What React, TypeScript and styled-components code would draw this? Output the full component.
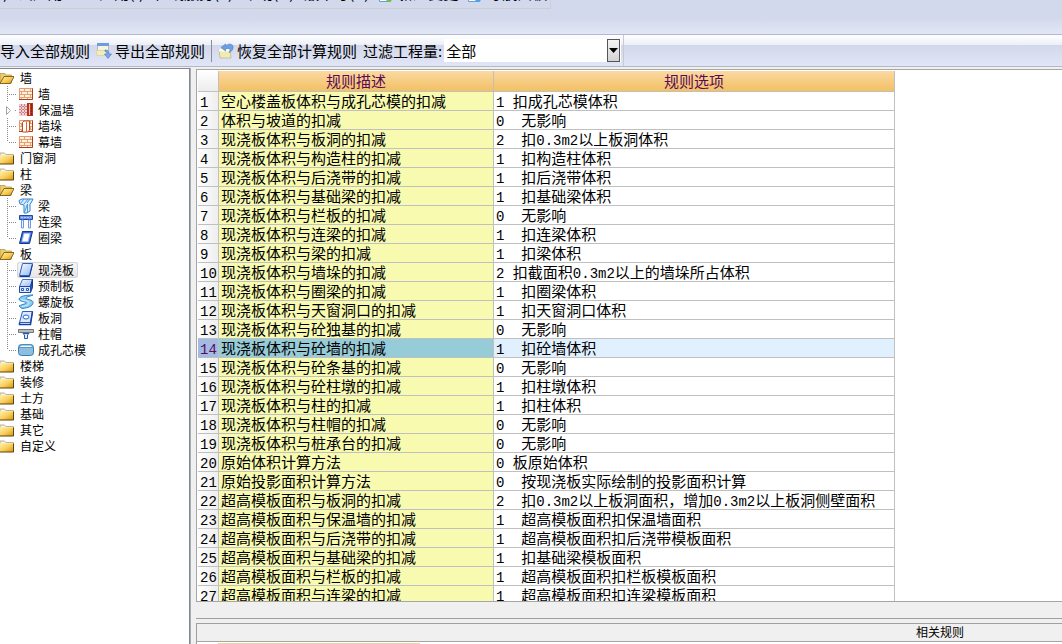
import React from "react";
import styled, { createGlobalStyle, css } from "styled-components";

const ui = '"Noto Sans CJK SC", sans-serif';

const GlobalStyle = createGlobalStyle`
  *, *::before, *::after { box-sizing: border-box; }
  html, body, #root { height: 100%; }
  body { margin: 0; overflow: hidden; background: #f0f0f0; color: #000; font-family: ${ui}; }
  button, select { font: inherit; color: inherit; }
`;

const Window = styled.div`
  display: flex;
  flex-direction: column;
  height: 100%;
`;

const MenuArea = styled.header`
  flex: none;
  height: 35px;
  background: linear-gradient(#d3d9ec 0, #d3d9ec 18px, #e1e7f6 34px);
  border-bottom: 1px solid #b4b7cf;
`;

const MenuBar = styled.nav`
  display: flex;
  align-items: flex-end;
  gap: 10px;
  width: 551px;
  height: 9px;
  padding: 0 0 6px 3px;
  overflow: hidden;
  border: solid #cfcdcd;
  border-width: 0 1px 1px 0;
  font-size: 15px;
  line-height: 18px;
`;

const MenuItem = styled.button`
  display: flex;
  align-items: flex-end;
  flex: none;
  gap: 6px;
  padding: 0;
  border: 0;
  background: none;
  white-space: nowrap;
`;

const ToolBar = styled.div`
  display: flex;
  align-items: center;
  flex: none;
  height: 32px;
  background: linear-gradient(#ffffff 0, #eceff8 10px, #d2d8eb 10px, #e0e6f6 31px);
  border-bottom: 1px solid #b4b7c4;
  font-size: 15px;
  line-height: 22px;
`;

const ToolGroup = styled.div`
  display: flex;
  align-items: center;
  height: 100%;
  padding-right: 2px;
  border-right: 1px solid #c8cad2;
`;

const ToolButton = styled.button`
  display: flex;
  align-items: center;
  gap: 3px;
  padding: 0;
  margin-right: 6px;
  border: 0;
  background: none;
  white-space: nowrap;
`;

const Divider = styled.span`
  width: 1px;
  height: 22px;
  margin-right: 6px;
  background: #8b8d99;
`;

const FilterLabel = styled.label`
  margin-right: 2px;
  white-space: nowrap;
`;

const Combo = styled.div`
  display: flex;
  width: 177px;
  height: 23px;
  background: #fff;
`;

const ComboSelect = styled.select`
  flex: 1;
  min-width: 0;
  padding: 0 2px;
  border: 0;
  outline: 0;
  appearance: none;
  background: transparent;
`;

const ComboArrow = styled.span`
  display: flex;
  align-items: center;
  justify-content: center;
  width: 13px;
  margin-right: 1px;
  border: 1px solid #555;
  background: linear-gradient(#f4f4f4, #d4d4d4);
  pointer-events: none;
`;

const Body = styled.main`
  display: flex;
  flex: 1;
  min-height: 0;
  padding-top: 1px;
`;

const TreePanel = styled.aside`
  flex: none;
  width: 190px;
  padding-top: 1px;
  background: #fff;
  border: solid #828790;
  border-width: 1px 1px 0 0;
  overflow: hidden;
  font-size: 12px;
  line-height: 16px;
`;

const TreeList = styled.ul`
  margin: 0;
  padding: 0;
  list-style: none;
`;

const FolderButton = styled.button`
  display: flex;
  align-items: center;
  gap: 6px;
  height: 16px;
  padding: 0;
  border: 0;
  background: none;
`;

const ChildItem = styled.li`
  display: grid;
  grid-template-columns: 17px auto;
  justify-content: start;
  height: 16px;
`;

const LeafButton = styled.button<{ $selected?: boolean }>`
  display: flex;
  align-items: center;
  gap: 4px;
  height: 16px;
  padding: 0 4px 0 1px;
  border: 0;
  border-radius: 3px;
  background: none;
  white-space: nowrap;
  ${(p) =>
    p.$selected &&
    css`
      background: linear-gradient(#f8f8f8, #e5e5e5);
      box-shadow: inset 0 0 0 1px #d5d5d5;
    `}
`;

const Content = styled.div`
  display: flex;
  flex-direction: column;
  flex: 1;
  min-width: 0;
  padding-left: 5px;
  border-left: 1px solid #a9acb3;
`;

const GridPanel = styled.section`
  flex: 1;
  min-height: 0;
  margin-top: 1px;
  padding: 1px 0 0 1px;
  overflow: hidden;
  background: #fff;
  border: solid #a6a6a6;
  border-width: 1px 0 1px 1px;
`;

const RuleTable = styled.table`
  width: 697px;
  table-layout: fixed;
  border-collapse: separate;
  border-spacing: 0;
  font-size: 15px;
  line-height: 18px;
`;

const HeadCell = styled.th<{ $width: number; $blank?: boolean }>`
  width: ${(p) => p.$width}px;
  height: 21px;
  padding: 0;
  border: solid #c0c0c0;
  border-width: 0 1px 1px 0;
  background: ${(p) => (p.$blank ? "linear-gradient(#fff, #ececec)" : "linear-gradient(#fad9a2, #f3c063)")};
  color: #5a0a5a;
  font-weight: 400;
`;

const cell = css`
  height: 19px;
  border: solid #c0c0c0;
  border-width: 0 1px 1px 0;
  white-space: pre;
  text-align: left;
  font-weight: 400;
`;

const NumberCell = styled.th<{ $active: boolean }>`
  ${cell}
  padding: 0 0 0 2px;
  background: ${(p) => (p.$active ? "#a3bbe4" : "linear-gradient(90deg, #fff, #eee)")};
  color: ${(p) => (p.$active ? "#5a0a5a" : "#000")};
`;

const NameCell = styled.td<{ $active: boolean }>`
  ${cell}
  padding: 0 0 0 2px;
  background: ${(p) => (p.$active ? "#96cbd8" : "#f8fbaf")};
`;

const OptionCell = styled.td<{ $active: boolean }>`
  ${cell}
  padding: 0 0 0 2px;
  background: ${(p) => (p.$active ? "#e0f0ff" : "#fff")};
`;

const Mono = styled.span`
  font-family: "Liberation Mono", monospace;
  font-size: 14px;
  line-height: 1;
`;

const Splitter = styled.div`
  flex: none;
  height: 17px;
  border-bottom: 1px solid #a0a0a0;
`;

const RelatedPanel = styled.section`
  flex: none;
  height: 21px;
  margin-top: 4px;
  border: solid #a0a0a0;
  border-width: 1px 0 0 1px;
  background: #fff;
`;

const RelatedTitle = styled.h2`
  height: 18px;
  margin: 0;
  padding-right: 98px;
  border-bottom: 1px solid #a6a6a6;
  background: #f0f0f0;
  font-size: 12px;
  font-weight: 400;
  line-height: 16px;
  text-align: right;
`;

const RelatedHead = styled.div`
  width: 202px;
  height: 1px;
  margin: 1px 0 0 21px;
  background: #f0d49c;
`;

const Folder = ({ open }: { open?: boolean }) => (
  <svg width="14" height="14" viewBox="0 0 14 14" aria-hidden="true">
    <defs>
      <linearGradient id={open ? "fo" : "fc"} x1="0" y1="0" x2="1" y2="1">
        <stop offset="0" stopColor="#fff0a8" />
        <stop offset=".5" stopColor="#f8cf5c" />
        <stop offset="1" stopColor="#dc9012" />
      </linearGradient>
    </defs>
    {open ? (
      <>
        <path d="M0 2.500h5l1 1.500h5.500V12H0z" fill="#f0cd62" stroke="#b09a5c" strokeWidth=".8" />
        <path d="M0 12.500 4 5.500h10L10.500 12.500z" fill="url(#fo)" stroke="#7d5a10" strokeWidth=".9" />
      </>
    ) : (
      <>
        <path d="M0 2h4.500L6 3.500h7.500v2H0z" fill="#fbf1c8" stroke="#a8a08a" strokeWidth=".8" />
        <path d="M0 4.500h13.500V13H0z" fill="url(#fc)" />
        <path d="M0 13h13.500V4.500" fill="none" stroke="#5f4408" />
      </>
    )}
  </svg>
);

const Guide = ({ last, caret }: { last?: boolean; caret?: boolean }) => (
  <svg width="17" height="16" viewBox="0 0 17 16" aria-hidden="true" fill="none" stroke="#888">
    {!caret && <path d={last ? "M7.5 0v8" : "M7.5 0v16"} strokeDasharray="1 1" />}
    <path d={caret ? "M15 8.5h2" : "M9 8.5h8"} strokeDasharray="1 1" />
    {caret && <path d="M6.5 4.5v8l4-4z" fill="#fff" stroke="#a6a6a6" />}
  </svg>
);

type Glyph =
  | "brick" | "insulated" | "pier" | "beam" | "link" | "ring"
  | "slab" | "precast" | "spiral" | "hole" | "cap" | "core";

const Bricks = () => (
  <>
    <path d="M1 2h14v12H1z" fill="#fff0e0" />
    <path d="M1 5.500h14M1 8.500h14M1 11.500h14M6.500 2.500v3M12.500 2.500v3M3.500 5.500v3M9.500 5.500v3M6.500 8.500v3M12.500 8.500v3M3.500 11.500v2M9.500 11.500v2" stroke="#e8a070" />
    <path d="M1.500 14V2.500H15" fill="none" stroke="#e09a70" />
    <path d="M1 13.500h13.500V2.500" fill="none" stroke="#a8401c" />
  </>
);

const glyphs: Record<Glyph, React.ReactNode> = {
  brick: <Bricks />,
  insulated: (
    <>
      <path d="M1 2h8v12H1z" fill="#f0d0d0" />
      <path d="M1 4.500h8M1 7.500h8M1 10.500h8M3.500 2v12M6.500 2v12" stroke="#d08088" strokeDasharray="2 1" />
      <path d="M9 1h6v13H9z" fill="#b83420" />
      <path d="M11.500 2v11" stroke="#f8c8a8" />
      <path d="M13.500 2v11" stroke="#842313" strokeDasharray="2 1" />
    </>
  ),
  pier: (
    <>
      <Bricks />
      <path d="M4.500 4.500 6 3h5.500v9L10 14H4.500z" fill="#fff" stroke="#c04a18" />
      <path d="M8.500 4v10" stroke="#d8683a" />
    </>
  ),
  beam: (
    <>
      <path d="M1 2.500 4 1h11l-2 4-1 1v7l-3 2H6V7L2 6z" fill="#d9eefc" stroke="#3382c8" />
      <path d="m3 5 3-4M6 6l4-5M9 5l3-4M6.500 14l3-8M9.500 6v9" stroke="#4c98d8" />
    </>
  ),
  link: (
    <>
      <path d="M1.500 1.500h13v4h-13z" fill="#6c94e6" stroke="#1c46a8" />
      <path d="M3 3.500h10" stroke="#b8ccf8" strokeDasharray="2 1" />
      <path d="M3.500 6h2v8h-2zM10.500 6h2v8h-2z" fill="#edf4ff" stroke="#7099dc" />
    </>
  ),
  ring: (
    <>
      <path d="M4.500 1.500h10l-3 12H1.500z" fill="#3a6cd4" stroke="#15388e" />
      <path d="M6 3.500h6l-2 8H4z" fill="#fff" stroke="#a9c4f4" />
    </>
  ),
  slab: (
    <>
      <path d="M4.500 1.500h10l-3 12H1.500z" fill="url(#slabFill)" stroke="#2d64ca" />
      <path d="M1.500 14.500h10l3-12" fill="none" stroke="#123b96" />
    </>
  ),
  precast: (
    <>
      <path d="M4.500 1.500h10l-2 7h-11z" fill="url(#slabFill)" stroke="#3b6fd0" />
      <path d="M12.500 8.500l2-7v8l-2 5z" fill="#2556bc" stroke="#163b91" />
      <path d="M1.500 8.500h11v6h-11z" fill="#dce8ff" stroke="#1c48a8" />
      <path d="M3.500 10.500h2v2h-2zM8.500 10.500h2v2h-2z" fill="#fff" stroke="#2556bc" />
    </>
  ),
  spiral: (
    <>
      <path d="M15 1C8 1 2 2 1 5c0 3 7 2 7 4 0 1-3 1-7 3l3 2.500c6-.5 11-2.500 11-6C15 5 8 6 8 4c0-1 3-1.500 7-3z" fill="#8bcaf2" stroke="#2b83c8" />
      <path d="M3 5c1 2 8 1 8 4 0 2-3 3-7 3.500" fill="none" stroke="#dcf2ff" />
    </>
  ),
  hole: (
    <>
      <path d="M4.500 1.500h10l-2 11h-11z" fill="#dce8ff" stroke="#285dc2" />
      <path d="M1.500 12.500v2h11l2-13" fill="none" stroke="#173f9f" strokeWidth="1.500" />
      <ellipse cx="8" cy="7" rx="3" ry="2" fill="#fff" stroke="#2563ca" />
    </>
  ),
  cap: (
    <>
      <path d="M.5 3.500h15v3H.5z" fill="#b9bdc2" stroke="#71767d" />
      <path d="M5 7.500h6L9.500 9v3.500h-3V9z" fill="#d9ebff" stroke="#235ab0" />
    </>
  ),
  core: (
    <>
      <rect x=".5" y="2.500" width="15" height="11" rx="3" fill="#8cbee0" stroke="#397dad" />
      <path d="M1 5.500 3 3h10l2 2.500z" fill="#f2faff" stroke="#5c9ac4" />
    </>
  ),
};

const LeafIcon = ({ name }: { name: Glyph }) => (
  <svg width="16" height="16" viewBox="0 0 16 16" fill="none" aria-hidden="true">
    <defs>
      <linearGradient id="slabFill" x1="0" y1="0" x2="1" y2="1">
        <stop offset="0" stopColor="#fff" />
        <stop offset="1" stopColor="#8fb6f5" />
      </linearGradient>
    </defs>
    {glyphs[name]}
  </svg>
);

const ExportIcon = () => (
  <svg width="16" height="16" viewBox="0 0 16 16" fill="none" aria-hidden="true">
    <path d="M1.500 1.500h11v9h-11z" fill="#f6f4dc" stroke="#b4bccb" />
    <path d="M1 0h12v3H1z" fill="#6c9be0" />
    <path d="M0 7.500h11v5H1z" fill="#f2edb8" stroke="#cfc898" strokeWidth=".6" />
    <path d="M9 7c3 0 4 1 4 4h2.500L12 15.500 8.500 11H11c0-1.500-.5-2.500-2-2.500z" fill="#7ba6ea" stroke="#5580c8" strokeWidth=".7" />
  </svg>
);

const RestoreIcon = () => (
  <svg width="16" height="16" viewBox="0 0 16 16" fill="none" aria-hidden="true">
    <path d="M1 6h11l1 9H2z" fill="#f1eab2" stroke="#b4b190" strokeWidth=".7" />
    <path d="M1 5.500h11v3H1z" fill="#fbfbee" />
    <path d="M3 4.500 7.500 1v2C10 .5 14 .5 15 3c.5 3-1 5.500-4 6.500 1.500-2 1.500-3.500 0-4-1-.3-2 0-3.500.5v2z" fill="#6f9fe0" stroke="#4a7cc6" strokeWidth=".6" />
  </svg>
);

const MenuIcon = ({ color }: { color: string }) => (
  <svg width="13" height="16" viewBox="0 0 13 16" aria-hidden="true">
    <path d="M.5 3.500h11v12H.5z" fill="#f4faff" stroke="#6c9fc8" />
    <circle cx="10" cy="13" r="3" fill={color} />
  </svg>
);

interface Leaf { label: string; icon: Glyph; caret?: boolean; selected?: boolean }
interface Group { label: string; children?: Leaf[] }

const tree: Group[] = [
  { label: "墙", children: [
    { label: "墙", icon: "brick" },
    { label: "保温墙", icon: "insulated", caret: true },
    { label: "墙垛", icon: "pier" },
    { label: "幕墙", icon: "brick" },
  ] },
  { label: "门窗洞" },
  { label: "柱" },
  { label: "梁", children: [
    { label: "梁", icon: "beam" },
    { label: "连梁", icon: "link" },
    { label: "圈梁", icon: "ring" },
  ] },
  { label: "板", children: [
    { label: "现浇板", icon: "slab", selected: true },
    { label: "预制板", icon: "precast" },
    { label: "螺旋板", icon: "spiral" },
    { label: "板洞", icon: "hole" },
    { label: "柱帽", icon: "cap" },
    { label: "成孔芯模", icon: "core" },
  ] },
  { label: "楼梯" },
  { label: "装修" },
  { label: "土方" },
  { label: "基础" },
  { label: "其它" },
  { label: "自定义" },
];

const rules: [string, string][] = [
  ["空心楼盖板体积与成孔芯模的扣减", "1 扣成孔芯模体积"],
  ["体积与坡道的扣减", "0  无影响"],
  ["现浇板体积与板洞的扣减", "2  扣0.3m2以上板洞体积"],
  ["现浇板体积与构造柱的扣减", "1  扣构造柱体积"],
  ["现浇板体积与后浇带的扣减", "1  扣后浇带体积"],
  ["现浇板体积与基础梁的扣减", "1  扣基础梁体积"],
  ["现浇板体积与栏板的扣减", "0  无影响"],
  ["现浇板体积与连梁的扣减", "1  扣连梁体积"],
  ["现浇板体积与梁的扣减", "1  扣梁体积"],
  ["现浇板体积与墙垛的扣减", "2 扣截面积0.3m2以上的墙垛所占体积"],
  ["现浇板体积与圈梁的扣减", "1  扣圈梁体积"],
  ["现浇板体积与天窗洞口的扣减", "1  扣天窗洞口体积"],
  ["现浇板体积与砼独基的扣减", "0  无影响"],
  ["现浇板体积与砼墙的扣减", "1  扣砼墙体积"],
  ["现浇板体积与砼条基的扣减", "0  无影响"],
  ["现浇板体积与砼柱墩的扣减", "1  扣柱墩体积"],
  ["现浇板体积与柱的扣减", "1  扣柱体积"],
  ["现浇板体积与柱帽的扣减", "0  无影响"],
  ["现浇板体积与桩承台的扣减", "0  无影响"],
  ["原始体积计算方法", "0 板原始体积"],
  ["原始投影面积计算方法", "0  按现浇板实际绘制的投影面积计算"],
  ["超高模板面积与板洞的扣减", "2  扣0.3m2以上板洞面积，增加0.3m2以上板洞侧壁面积"],
  ["超高模板面积与保温墙的扣减", "1  超高模板面积扣保温墙面积"],
  ["超高模板面积与后浇带的扣减", "1  超高模板面积扣后浇带模板面积"],
  ["超高模板面积与基础梁的扣减", "1  扣基础梁模板面积"],
  ["超高模板面积与栏板的扣减", "1  超高模板面积扣栏板模板面积"],
  ["超高模板面积与连梁的扣减", "1  超高模板面积扣连梁模板面积"],
];

const ACTIVE_ROW = 14;

/* Latin runs are set in the half-width face, Chinese runs in the cell font. */
const Mixed = ({ text }: { text: string }) => (
  <>
    {(text.match(/[\x20-\x7e]+|[^\x20-\x7e]+/g) ?? []).map((run, i) =>
      /^[\x20-\x7e]/.test(run) ? <Mono key={i}>{run}</Mono> : run
    )}
  </>
);

export default function App() {
  return (
    <Window>
      <GlobalStyle />
      <MenuArea>
        <MenuBar>
          <MenuItem>)</MenuItem>
          <MenuItem>云应用</MenuItem>
          <MenuItem>BIM应用(I)</MenuItem>
          <MenuItem>在线服务(S)</MenuItem>
          <MenuItem>帮助(H)</MenuItem>
          <MenuItem>版本号(B)</MenuItem>
          <MenuItem><MenuIcon color="#6cc24a" />新建变更</MenuItem>
          <MenuItem><MenuIcon color="#4ea3e6" />导航面板</MenuItem>
        </MenuBar>
      </MenuArea>
      <ToolBar>
        <ToolGroup>
          <ToolButton>导入全部规则</ToolButton>
          <ToolButton><ExportIcon />导出全部规则</ToolButton>
          <Divider />
          <ToolButton><RestoreIcon />恢复全部计算规则</ToolButton>
          <FilterLabel htmlFor="quantity">过滤工程量:</FilterLabel>
          <Combo>
            <ComboSelect id="quantity" defaultValue="all">
              <option value="all">全部</option>
            </ComboSelect>
            <ComboArrow>
              <svg width="9" height="5" viewBox="0 0 9 5" aria-hidden="true"><path d="M0 0h9L4.500 5z" /></svg>
            </ComboArrow>
          </Combo>
        </ToolGroup>
      </ToolBar>
      <Body>
        <TreePanel>
          <TreeList>
            {tree.map((group) => (
              <li key={group.label}>
                <FolderButton><Folder open={!!group.children} />{group.label}</FolderButton>
                {group.children && (
                  <TreeList>
                    {group.children.map((leaf, i) => (
                      <ChildItem key={leaf.label}>
                        <Guide caret={leaf.caret} last={i === group.children!.length - 1} />
                        <LeafButton $selected={leaf.selected}><LeafIcon name={leaf.icon} />{leaf.label}</LeafButton>
                      </ChildItem>
                    ))}
                  </TreeList>
                )}
              </li>
            ))}
          </TreeList>
        </TreePanel>
        <Content>
          <GridPanel>
            <RuleTable>
              <thead>
                <tr>
                  <HeadCell $width={21} $blank />
                  <HeadCell $width={275}>规则描述</HeadCell>
                  <HeadCell $width={401}>规则选项</HeadCell>
                </tr>
              </thead>
              <tbody>
                {rules.map(([name, option], i) => {
                  const active = i + 1 === ACTIVE_ROW;
                  return (
                    <tr key={i}>
                      <NumberCell $active={active} scope="row"><Mono>{i + 1}</Mono></NumberCell>
                      <NameCell $active={active}>{name}</NameCell>
                      <OptionCell $active={active}><Mixed text={option} /></OptionCell>
                    </tr>
                  );
                })}
              </tbody>
            </RuleTable>
          </GridPanel>
          <Splitter />
          <RelatedPanel>
            <RelatedTitle>相关规则</RelatedTitle>
            <RelatedHead />
          </RelatedPanel>
        </Content>
      </Body>
    </Window>
  );
}
